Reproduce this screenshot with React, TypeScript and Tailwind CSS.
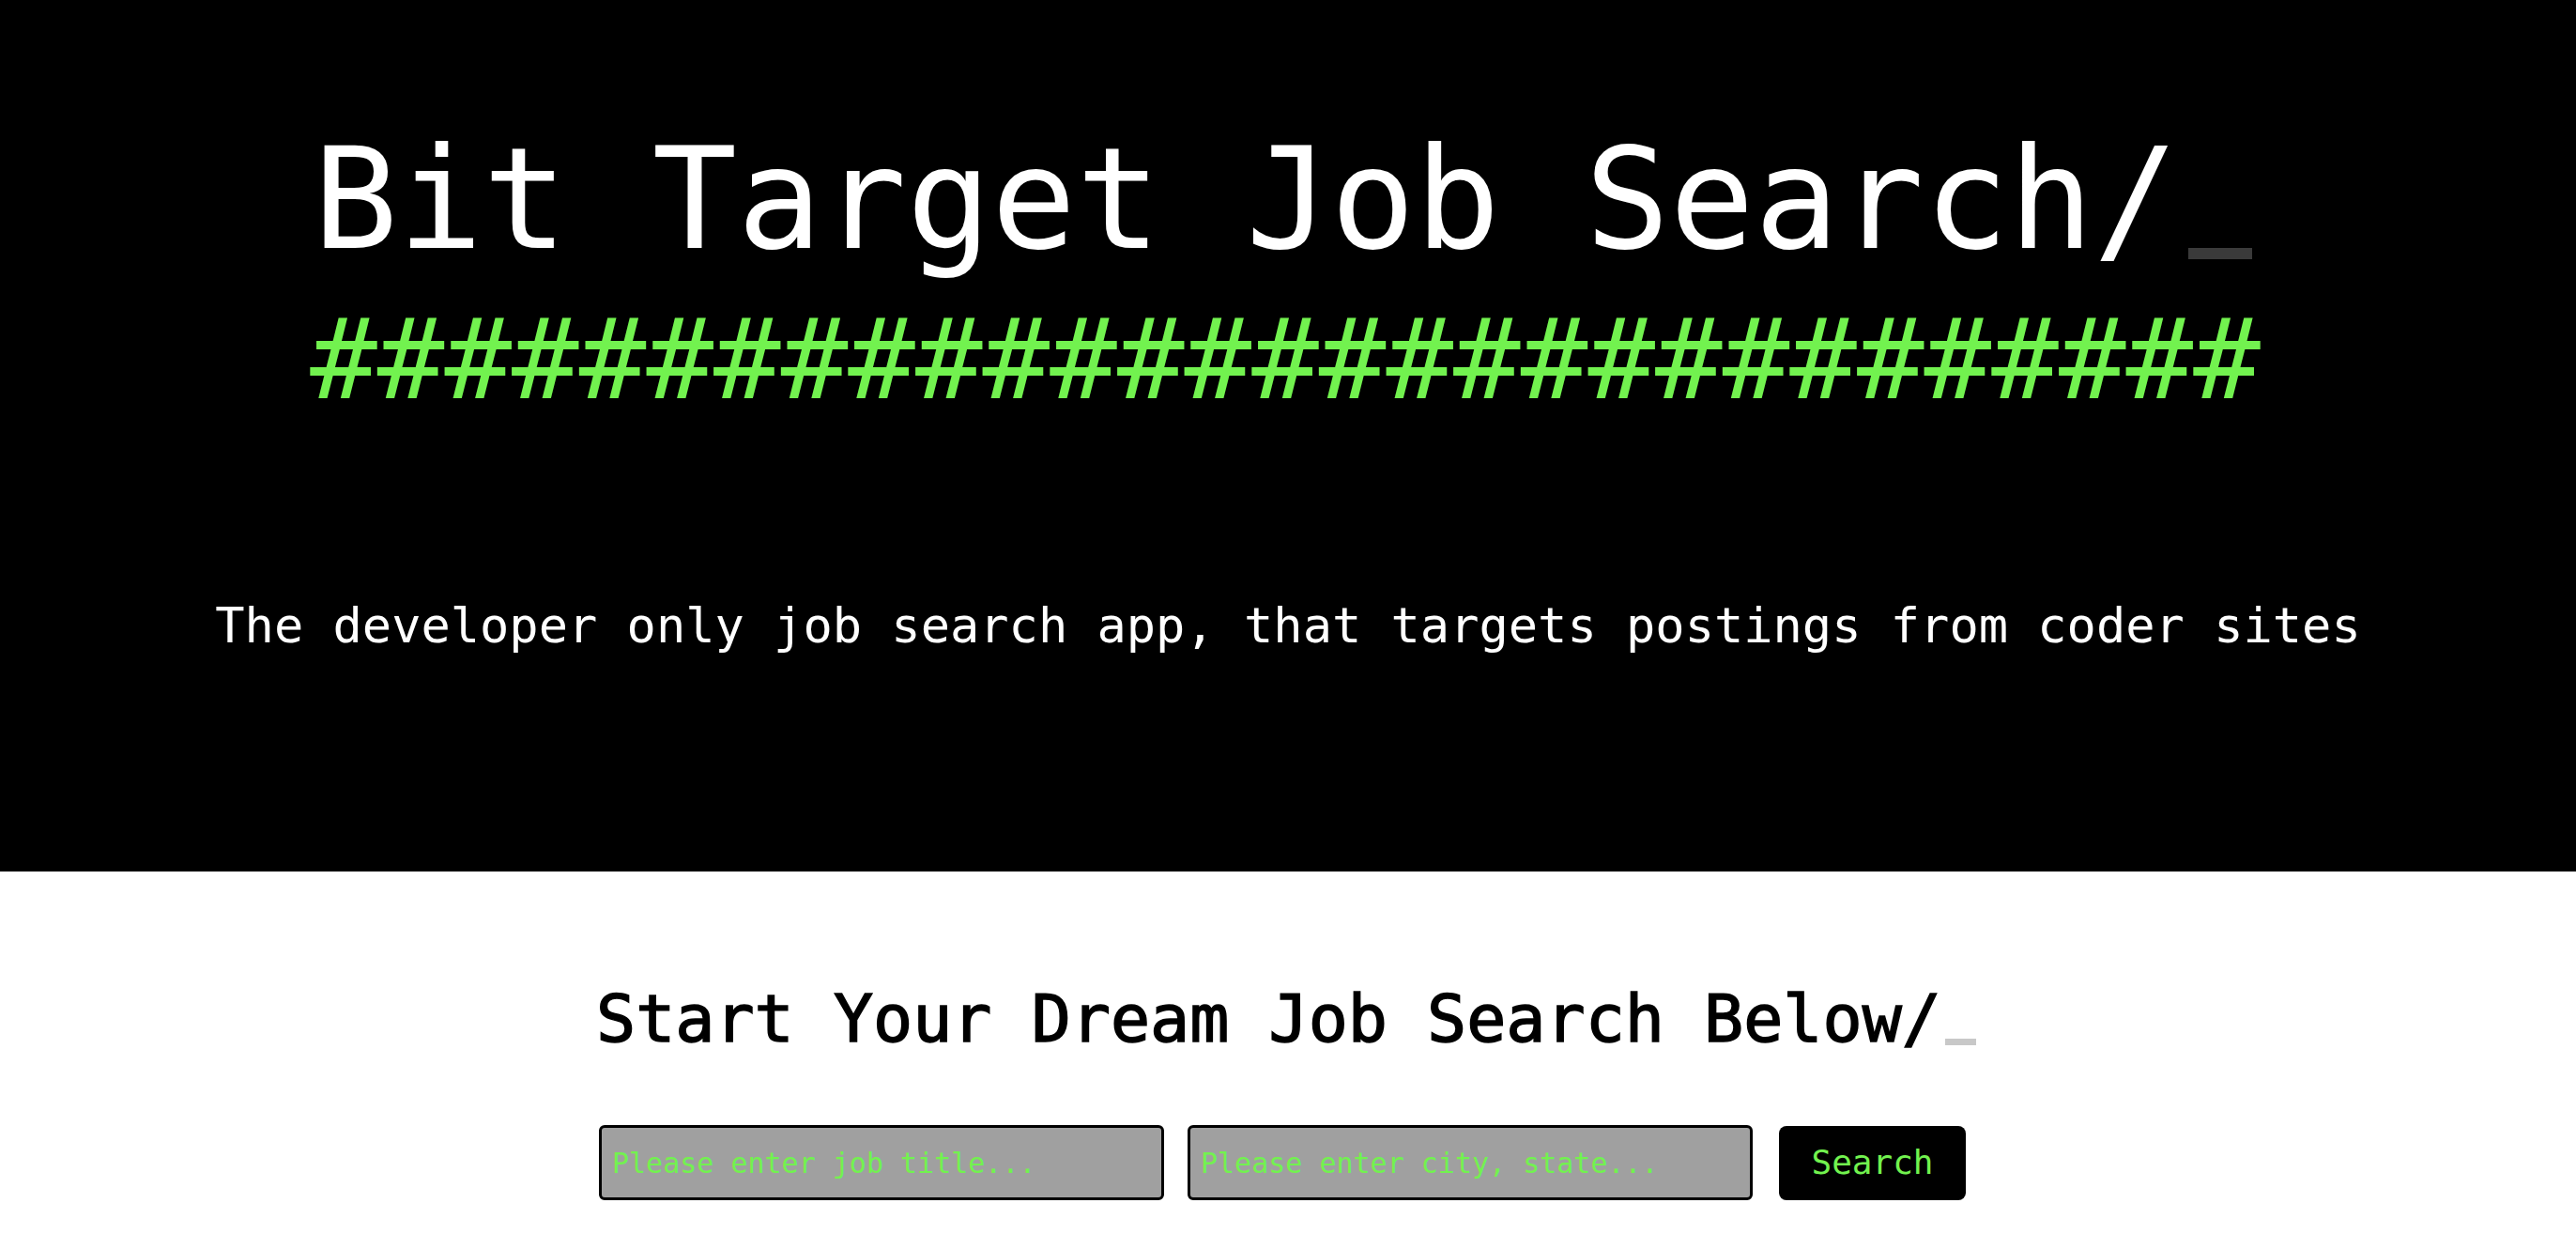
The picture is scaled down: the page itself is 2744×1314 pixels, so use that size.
import { useState } from "react";

const mono = "font-['DejaVu_Sans_Mono','Liberation_Mono',monospace]";

export default function App() {
  const [title, setTitle] = useState("");
  const [place, setPlace] = useState("");

  return (
    <div className={`min-h-screen bg-white ${mono}`}>
      {/* hero */}
      <header className="h-[928px] bg-black flex flex-col items-center pt-[137px]">
        <h1 className="text-[150px] leading-none text-white font-normal whitespace-nowrap">
          Bit Target Job Search/
          <span className="inline-block w-[68px] h-[12px] ml-[11px] mr-[11px] bg-[#3a3a3a] align-[-12px]" />
        </h1>
        <div className="mt-[37px] pr-[6px] text-[119px] leading-none text-[#72f24f] whitespace-nowrap">
          #############################
        </div>
        <p className="mt-[197px] text-[52px] leading-none text-white whitespace-nowrap">
          The developer only job search app, that targets postings from coder sites
        </p>
      </header>

      {/* search */}
      <section className="flex flex-col items-center pt-[122px] pb-16">
        <h2 className="text-[70px] leading-none text-black font-normal [-webkit-text-stroke:1.5px_black] whitespace-nowrap">
          Start Your Dream Job Search Below/
          <span className="inline-block w-[33px] h-[7px] ml-[4px] mr-[4px] bg-[#c8c8c8] align-[-4px]" />
        </h2>
        <form
          className="mt-[78px] pr-[12px] flex items-center"
          onSubmit={(e) => e.preventDefault()}
        >
          <input
            value={title}
            onChange={(e) => setTitle(e.target.value)}
            placeholder="Please enter job title..."
            className={`w-[602px] h-[80px] bg-[#a0a0a0] border-[3px] border-black rounded-md pl-[11px] text-[30px] text-[#72f24f] placeholder:text-[#72f24f] outline-none ${mono}`}
          />
          <input
            value={place}
            onChange={(e) => setPlace(e.target.value)}
            placeholder="Please enter city, state..."
            className={`ml-[25px] w-[602px] h-[80px] bg-[#a0a0a0] border-[3px] border-black rounded-md pl-[11px] text-[30px] text-[#72f24f] placeholder:text-[#72f24f] outline-none ${mono}`}
          />
          <button
            type="submit"
            className={`ml-[28px] w-[199px] h-[79px] bg-black rounded-lg text-[36px] text-[#72f24f] ${mono}`}
          >
            Search
          </button>
        </form>
      </section>
    </div>
  );
}
